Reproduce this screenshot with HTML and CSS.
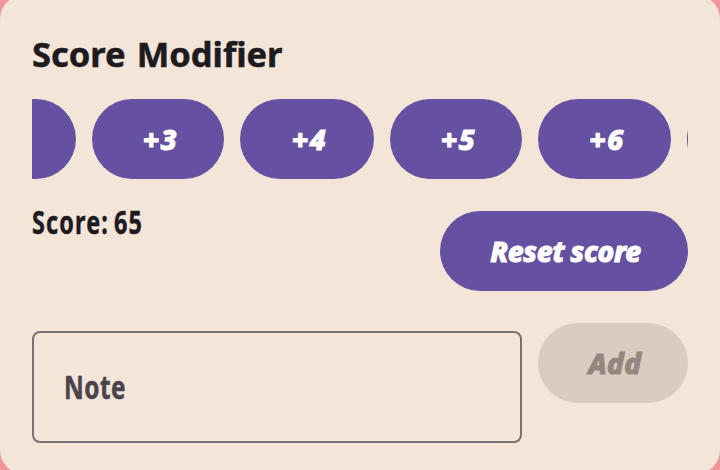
FILE: index.html
```html
<!DOCTYPE html>
<html lang="en">
<head>
<meta charset="utf-8">
<title>Score Modifier</title>
<link rel="stylesheet" href="styles.css">
</head>
<body>
<main class="card">
  <h1 class="title"><span class="title-text">Score Modifier</span></h1>
  <div class="chips">
    <button class="btn chip first" aria-label="Add 2"></button>
    <button class="btn chip"><span class="num">+3</span></button>
    <button class="btn chip four"><span class="num">+4</span></button>
    <button class="btn chip"><span class="num">+5</span></button>
    <button class="btn chip six"><span class="num">+6</span></button>
    <button class="btn chip" aria-label="Add 7"></button>
  </div>
  <div class="score-row">
    <div class="score"><span class="score-text">Score: 65</span></div>
    <button class="btn reset"><span class="reset-text">Reset score</span></button>
  </div>
  <div class="note-row">
    <div class="note"><span class="note-text">Note</span></div>
    <button class="btn add" disabled><span class="add-text">Add</span></button>
  </div>
</main>
</body>
</html>
```
FILE: styles.css
```css
* { box-sizing: border-box; }
body {
  margin: 0;
  height: 470px;
  overflow: hidden;
  background: #ef9499;
  font-family: "Noto Sans", "Open Sans", sans-serif;
  font-weight: 700;
  color: #1d1b20;
}
.card {
  height: 479px;
  margin-top: -5px;
  padding: 34px 32px 0;
  border-radius: 24px;
  background: #f3e5d8;
}
.title {
  margin: 0;
  height: 50px;
  font-size: 34.5px;
  line-height: 49px;
  word-spacing: 2px;
  white-space: nowrap;
}
.title-text, .score-text, .note-text, .num, .reset-text, .add-text {
  display: inline-block;
  white-space: nowrap;
  -webkit-text-stroke: .5px currentColor;
  stroke-linejoin: round;
}
.score-text, .note-text { transform-origin: left center; }
.chips {
  display: flex;
  gap: 16px;
  margin-top: 20px;
  overflow: hidden;
}
.btn {
  display: flex;
  flex: none;
  align-items: center;
  justify-content: center;
  height: 80px;
  padding: 0;
  border: 0;
  border-radius: 40px;
  background: #6650a2;
  color: #fff;
  font: italic 800 28px "Noto Sans", "Open Sans", sans-serif;
}
.num, .reset-text, .add-text { -webkit-text-stroke-width: 1px; }
.num {
  letter-spacing: 1.5px;
  padding-left: 5px;
}
.chip { width: 132px; }
.first { margin-left: -88px; }
.four { width: 134px; }
.six { width: 133px; }
.score-row {
  display: flex;
  justify-content: space-between;
  margin-top: 32px;
}
.score {
  height: 24px;
  font-size: 32px;
  line-height: 22px;
}
.score-text {
  letter-spacing: 1.6px;
  word-spacing: -3px;
  transform: scaleX(.73);
}
.reset { width: 248px; }
.reset-text {
  letter-spacing: -.2px;
  word-spacing: -1px;
  padding-left: 3px;
}
.note-row {
  display: flex;
  gap: 16px;
  margin-top: 32px;
}
.note {
  width: 490px;
  height: 112px;
  margin-top: 8px;
  padding-left: 30px;
  border: 2px solid #7b7078;
  border-radius: 8px;
  color: #49434c;
  font-size: 32px;
  line-height: 108px;
}
.note-text {
  letter-spacing: .6px;
  transform: scaleX(.76);
}
.add {
  width: 150px;
  background: #daccc0;
  color: #93877f;
}
.add-text {
  letter-spacing: .5px;
  padding-left: 4px;
}
```
